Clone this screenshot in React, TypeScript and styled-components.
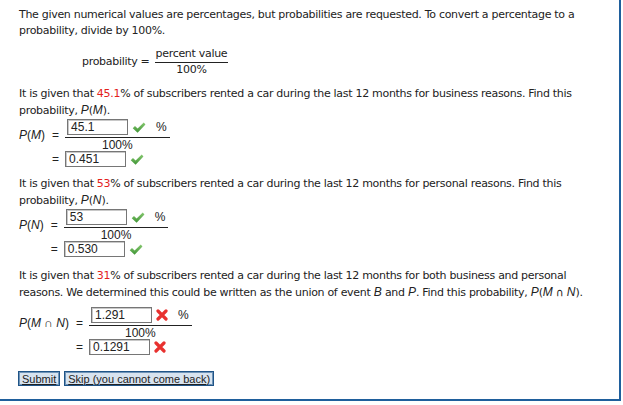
import React from 'react';
import styled, { createGlobalStyle } from 'styled-components';

const Global = createGlobalStyle`
  html, body { margin: 0; padding: 0; background: #fff; }
`;

const Page = styled.div`
  box-sizing: border-box;
  width: 621px;
  height: 401px;
  border-right: 2px solid #1f5f9c;
  border-bottom: 2px solid #1f5f9c;
  padding: 7px 19px 0 19px;
  font-family: "DejaVu Sans", Verdana, sans-serif;
  font-size: 11px;
  letter-spacing: -0.3px;
  line-height: 16px;
  color: #222;
`;

const Para = styled.p<{ $mt: number }>`
  margin: ${(p) => p.$mt}px 0 0;
`;

const Red = styled.span`
  color: #e3211c;
`;

const V = styled.span`
  font-family: "Liberation Sans", Arial, sans-serif;
  font-style: italic;
  font-size: 12px;
  letter-spacing: 0;
`;

const Formula = styled.div`
  display: flex;
  align-items: center;
  margin: 8px 0 0 63px;
  gap: 5px;
  line-height: 14px;
`;

const SimpleFrac = styled.div`
  display: inline-flex;
  flex-direction: column;
  align-items: center;
`;

const SimpleNum = styled.div`
  padding: 0 1px 1px;
  border-bottom: 1px solid #222;
`;

const Eq = styled.div<{ $mt: number }>`
  display: grid;
  grid-template-columns: auto auto auto;
  justify-content: start;
  column-gap: 6px;
  align-items: center;
  margin-top: ${(p) => p.$mt}px;
  font-family: "Liberation Sans", Arial, sans-serif;
  font-size: 12px;
  letter-spacing: 0;
  line-height: 14px;
  color: #222;
`;

const Name = styled.div`
  grid-column: 1;
  font-style: italic;
  padding-right: 1px;
`;

const Up = styled.span`
  font-style: normal;
`;

const EqSign = styled.div`
  grid-column: 2;
`;

const Frac = styled.div`
  grid-column: 3;
  display: flex;
  flex-direction: column;
  align-items: stretch;
`;

const Num = styled.div`
  display: flex;
  align-items: center;
  padding: 0 3px 2px 2px;
  border-bottom: 1px solid #222;
`;

const Den = styled.div`
  text-align: center;
  padding-top: 1px;
  line-height: 12px;
`;

const Answer = styled.div`
  grid-column: 3;
  display: flex;
  align-items: center;
`;

const Box = styled.div`
  box-sizing: border-box;
  width: 61px;
  height: 16px;
  border: 1px solid #767676;
  box-shadow: inset 1px 1px 0 #c8c8c8;
  background: #fff;
  padding: 1px 0 0 3px;
  font-family: "Liberation Sans", Arial, sans-serif;
  font-size: 12px;
  line-height: 13px;
  color: #222;
`;

const Mark = styled.span`
  display: inline-flex;
  margin-left: 4px;
`;

const Pct = styled.span`
  margin-left: 10px;
`;

const Buttons = styled.div`
  display: flex;
  gap: 4px;
  margin-top: 16px;
  margin-left: -1px;
`;

const Button = styled.button`
  box-sizing: border-box;
  height: 15px;
  padding: 0 3px;
  border: 1px solid #1f5487;
  box-shadow: inset 0 0 0 1px #6f94b8;
  background: #d7e3ef;
  font-family: "Liberation Sans", Arial, sans-serif;
  font-size: 11px;
  letter-spacing: 0;
  line-height: 12px;
  color: #222;
  text-decoration: underline;
  cursor: pointer;
`;

const Check = () => (
  <svg width="14" height="13" viewBox="0 0 15 13">
    <defs>
      <linearGradient id="cg" x1="0" y1="0" x2="0" y2="1">
        <stop offset="0" stopColor="#86c870" />
        <stop offset="1" stopColor="#3f9435" />
      </linearGradient>
    </defs>
    <path d="M0.8 7.2 L3.2 5 L6 7.6 L12.6 1.2 L14.4 3.4 L6 12.2 Z" fill="url(#cg)" />
  </svg>
);

const Cross = () => (
  <svg width="12" height="12" viewBox="0 0 12 12">
    <path d="M2 2 L10 10 M10 2 L2 10" stroke="#e8312f" strokeWidth="3.2" strokeLinecap="round" />
  </svg>
);

type Row = {
  name: React.ReactNode;
  top: string;
  bottom: string;
  ok: boolean;
  mt: number;
};

const Equation: React.FC<Row> = ({ name, top, bottom, ok, mt }) => (
  <Eq $mt={mt}>
    <Name>{name}</Name>
    <EqSign>=</EqSign>
    <Frac>
      <Num>
        <Box>{top}</Box>
        <Mark>{ok ? <Check /> : <Cross />}</Mark>
        <Pct>%</Pct>
      </Num>
      <Den>100%</Den>
    </Frac>
    <EqSign>=</EqSign>
    <Answer>
      <Box>{bottom}</Box>
      <Mark>{ok ? <Check /> : <Cross />}</Mark>
    </Answer>
  </Eq>
);

export default function App() {
  return (
    <Page>
      <Global />
      <Para $mt={0}>
        The given numerical values are percentages, but probabilities are requested. To convert a percentage to a
        probability, divide by 100%.
      </Para>
      <Formula>
        <span>probability =</span>
        <SimpleFrac>
          <SimpleNum>percent value</SimpleNum>
          <span>100%</span>
        </SimpleFrac>
      </Formula>
      <Para $mt={9}>
        It is given that <Red>45.1</Red>% of subscribers rented a car during the last 12 months for business reasons.
        Find this probability, <V>P</V>(<V>M</V>).
      </Para>
      <Equation
        mt={0}
        name={<>P<Up>(</Up>M<Up>)</Up></>}
        top="45.1"
        bottom="0.451"
        ok
      />
      <Para $mt={9}>
        It is given that <Red>53</Red>% of subscribers rented a car during the last 12 months for personal reasons.
        Find this probability, <V>P</V>(<V>N</V>).
      </Para>
      <Equation
        mt={0}
        name={<>P<Up>(</Up>N<Up>)</Up></>}
        top="53"
        bottom="0.530"
        ok
      />
      <Para $mt={11}>
        It is given that <Red>31</Red>% of subscribers rented a car during the last 12 months for both business and
        personal reasons. We determined this could be written as the union of event <V>B</V> and <V>P</V>. Find this
        probability, <V>P</V>(<V>M</V> ∩ <V>N</V>).
      </Para>
      <Equation
        mt={6}
        name={<>P<Up>(</Up>M <Up>∩</Up> N<Up>)</Up></>}
        top="1.291"
        bottom="0.1291"
        ok={false}
      />
      <Buttons>
        <Button>Submit</Button>
        <Button>Skip (you cannot come back)</Button>
      </Buttons>
    </Page>
  );
}
